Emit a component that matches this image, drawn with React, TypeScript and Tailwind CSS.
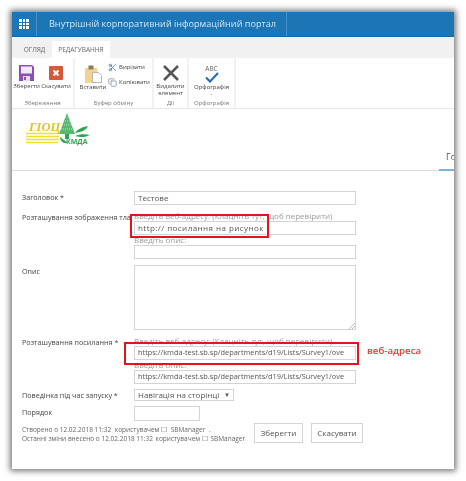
import { Scissors, Copy } from "lucide-react"

const font = "font-['Open_Sans',sans-serif]"

function RibbonGroup({ title, className, children }: { title: string; className: string; children: React.ReactNode }) {
  return (
    <div className={`flex flex-col ${className}`}>
      <div className="flex h-[41px] border-r-2 border-[#f1f1f1] pt-[7px]">{children}</div>
      <div className="border-r-2 border-[#f1f1f1] text-center text-[6px] leading-[10px] text-[#777]">{title}</div>
    </div>
  )
}

function SaveIcon() {
  return (
    <svg width="15" height="16" viewBox="0 0 15 16">
      <path d="M0 0h13l2 2v14H0z" fill="#8d4fb5" />
      <rect x="2" y="1.5" width="11" height="7" fill="#f1e9f6" />
      <rect x="4" y="11" width="7" height="5" fill="#e6d9ee" />
      <rect x="5" y="12" width="2" height="3" fill="#8d4fb5" />
    </svg>
  )
}

function CancelIcon() {
  return (
    <svg width="14" height="14" viewBox="0 0 14 14">
      <rect width="14" height="14" rx="1" fill="#d8593a" />
      <path d="M4.5 4.5l5 5M9.5 4.5l-5 5" stroke="#fff" strokeWidth="2" />
    </svg>
  )
}

function PasteIcon() {
  return (
    <svg width="17" height="18" viewBox="0 0 17 18">
      <rect x="0" y="3" width="12" height="15" fill="#f4d28f" />
      <rect x="3.5" y="0.5" width="5" height="4" fill="#8a7a60" />
      <path d="M7.5 7.5h6l3 3v7h-9z" fill="#fff" stroke="#a8a8a8" strokeWidth="0.8" />
    </svg>
  )
}

function Field({ value = "", className = "" }: { value?: string; className?: string }) {
  return (
    <div className={`flex h-[14px] w-[222px] items-center overflow-hidden whitespace-nowrap border border-[#d4d4d4] pl-[3px] text-[#555] ${className}`}>
      {value}
    </div>
  )
}

function Hint({ children }: { children: React.ReactNode }) {
  return <div className="h-[10px] whitespace-nowrap text-[8px] leading-[10px] text-[#9a9a9a]">{children}</div>
}

function Row({ label, className = "", children }: { label: string; className?: string; children: React.ReactNode }) {
  return (
    <div className={`flex ${className}`}>
      <div className="w-[112px] shrink-0 whitespace-nowrap pt-px text-[7.2px] leading-[10px] text-[#444]">{label}</div>
      <div className="min-w-0">{children}</div>
    </div>
  )
}

function Logo() {
  return (
    <div className="relative ml-[13px] mt-[4px] h-[32px] w-[66px]">
      <svg className="absolute left-0 top-0" width="66" height="32" viewBox="0 0 66 32">
        <path d="M1 20.5h33M1 23.5h33M1 26.5h33M1 29.5h32" stroke="#ecdf3a" strokeWidth="1.7" />
        <path d="M42 0l8 21H34z" fill="#58b86f" />
        <path d="M40 4h4M38 8h8M37 12h10M36 16h12" stroke="#e6f4ea" strokeWidth="0.7" strokeDasharray="1 1" />
        <path d="M40 21h4v5h-4z" fill="#2fa44f" />
        <path d="M50 20c3-4 7-6 13-7-2 4-6 6-13 7zM50 23c5-2 10-2 15-1-4 2-9 3-15 1zM35 24l8 6h-4c-2-1-4-3-4-6z" fill="#2fa44f" />
      </svg>
      <span className="absolute left-[4px] top-[7px] font-['Liberation_Serif',serif] text-[12.5px] font-bold italic leading-[14px] text-[#e0c51f]">ГІОЦ</span>
      <span className="absolute bottom-[-1px] left-[41px] text-[7px] font-bold leading-[8px] text-[#2fa44f]">КМДА</span>
    </div>
  )
}

export default function App() {
  const longUrl = "https://kmda-test.sb.sp/departments/d19/Lists/Survey1/ove"

  return (
    <div className={`relative h-[481px] w-[466px] overflow-hidden bg-white pl-3 pt-3 ${font} blur-[0.4px]`}>
      <div className="flex h-[457px] w-[442px] flex-col overflow-hidden bg-white shadow-[0_0_6px_2px_rgba(0,0,0,0.55)]">
        <div className="flex h-[25px] shrink-0 items-center border-b border-[#0f68a8] bg-[#1c76b6] text-white">
          <div className="flex h-full w-[25px] items-center justify-center border-r border-[#4a92c6]">
            <div className="grid grid-cols-3 gap-px">
              {Array.from({ length: 9 }).map((_, i) => (
                <div key={i} className="h-[2.5px] w-[2.5px] bg-white" />
              ))}
            </div>
          </div>
          <div className="flex h-full w-[250px] items-center whitespace-nowrap border-r border-[#4a92c6] pl-[12px] text-[9.1px] text-[#d5e6f3]">
            Внутрішній корпоративний інформаційний портал
          </div>
        </div>

        <div className="flex h-[21px] shrink-0 items-end bg-[#f1f1f1] pl-[9px] text-[6.5px] text-[#666]">
          <div className="mr-[4px] flex h-[17px] w-[27px] items-center justify-center">ОГЛЯД</div>
          <div className="flex h-[17px] w-[58px] items-center justify-center bg-white">РЕДАГУВАННЯ</div>
        </div>

        <div className="flex h-[51px] shrink-0 border-b border-[#e8e8e8] text-[6px] leading-[7px] text-[#444]">
          <RibbonGroup title="Збереження" className="w-[63px]">
            <div className="flex w-[27px] flex-col items-center gap-[2px] pl-[2px]">
              <SaveIcon />
              <span className="whitespace-nowrap">Зберегти</span>
            </div>
            <div className="ml-[1px] flex w-[32px] flex-col items-center gap-[3px] pt-[1px]">
              <CancelIcon />
              <span>Скасувати</span>
            </div>
          </RibbonGroup>
          <RibbonGroup title="Буфер обміну" className="w-[79px]">
            <div className="flex w-[33px] flex-col items-center gap-px pl-[3px]">
              <PasteIcon />
              <span>Вставити</span>
            </div>
            <div className="-mt-[2px] flex flex-col gap-[6px]">
              <div className="flex items-center gap-[2px]">
                <Scissors size={9} color="#4a6f94" />
                <span>Вирізати</span>
              </div>
              <div className="flex items-center gap-[2px]">
                <Copy size={9} color="#7a8a9a" />
                <span>Копіювати</span>
              </div>
            </div>
          </RibbonGroup>
          <RibbonGroup title="Дії" className="w-[35px]">
            <div className="flex w-full flex-col items-center text-center">
              <svg width="18" height="16" viewBox="0 0 18 16">
                <path d="M2 1l14 14M16 1L2 15" stroke="#555" strokeWidth="2.5" />
              </svg>
              <span className="mt-[2px]">Видалити елемент</span>
            </div>
          </RibbonGroup>
          <RibbonGroup title="Орфографія" className="w-[47px]">
            <div className="flex w-full flex-col items-center">
              <span className="text-[6.5px] leading-[7px] text-[#666]">ABC</span>
              <svg width="14" height="11" viewBox="0 0 14 11">
                <path d="M1 5.5l4 4L13 1" fill="none" stroke="#2a6fb4" strokeWidth="2.2" />
              </svg>
              <span className="mt-px">Орфографія</span>
              <span>-</span>
            </div>
          </RibbonGroup>
        </div>

        <div className="flex h-[62px] shrink-0 items-start justify-between border-b border-[#dcdcdc]">
          <Logo />
          <div className="mt-[41px] h-[21px] w-[15px] overflow-hidden border-b-2 border-[#7db2da] pl-[7px] text-[9px] leading-[14px] text-[#555]">
            <span>Го</span>
          </div>
        </div>

        <div className="pl-[10px] pt-[20px]">
          <Row label="Заголовок *">
            <Field value="Тестове" className="text-[8px]" />
          </Row>
          <Row label="Розташування зображення тла" className="mt-[6px]">
            <Hint>Введіть веб-адресу: (Клацніть тут, щоб перевірити)</Hint>
            <Field value="http:// посилання на рисунок" className="text-[8px] tracking-[0.45px]" />
            <Hint>Введіть опис:</Hint>
            <Field />
          </Row>
          <Row label="Опис" className="mt-[6px]">
            <div className="relative h-[65px] w-[222px] border border-[#d4d4d4]">
              <svg className="absolute bottom-0 right-0" width="6" height="6" viewBox="0 0 6 6">
                <path d="M0 6l6-6M3 6l3-3" stroke="#999" strokeWidth="0.7" />
              </svg>
            </div>
          </Row>
          <Row label="Розташування посилання *" className="mt-[6px]">
            <Hint>Введіть веб-адресу: (Клацніть тут, щоб перевірити)</Hint>
            <Field value={longUrl} className="text-[7.4px]" />
            <Hint>Введіть опис:</Hint>
            <Field value={longUrl} className="text-[7.4px]" />
          </Row>
          <Row label="Поведінка під час запуску *" className="mt-[5px]">
            <div className="flex h-[12px] w-[100px] items-center justify-between border border-[#d4d4d4] px-[3px] text-[8px] text-[#555]">
              <span>Навігація на сторінці</span>
              <span className="text-[6px]">▼</span>
            </div>
          </Row>
          <Row label="Порядок" className="mt-[5px]">
            <div className="h-[15px] w-[66px] border border-[#d4d4d4]" />
          </Row>
          <div className="flex">
            <div className="w-[232px] pt-[4px] text-[6.5px] leading-[9px] text-[#666]">
              <div className="whitespace-nowrap">
                Створено о 12.02.2018 11:32 <span className="ml-[2px]">користувачем</span> ☐ <span className="ml-[2px]">SBManager</span> <span className="ml-[2px]">.</span>
              </div>
              <div className="whitespace-nowrap">
                Останні зміни внесено о 12.02.2018 11:32 <span className="ml-[1px]">користувачем</span> ☐ <span className="ml-[1px]">SBManager</span>
              </div>
            </div>
            <div className="flex gap-[8px] pt-[2px] text-[8px] text-[#555]">
              <div className="flex h-[20px] w-[49px] items-center justify-center border border-[#d4d4d4]">Зберегти</div>
              <div className="flex h-[20px] w-[52px] items-center justify-center border border-[#d4d4d4]">Скасувати</div>
            </div>
          </div>
        </div>
      </div>

      <div className="absolute left-[130px] top-[214px] h-[24px] w-[139px] border-2 border-[#e8121f]" />
      <div className="absolute left-[124px] top-[342px] h-[23px] w-[235px] border-2 border-[#e8121f]" />
      <div className="absolute left-[367px] top-[344px] text-[9.7px] font-semibold leading-[14px] text-[#f0323c]">веб-адреса</div>
    </div>
  )
}
